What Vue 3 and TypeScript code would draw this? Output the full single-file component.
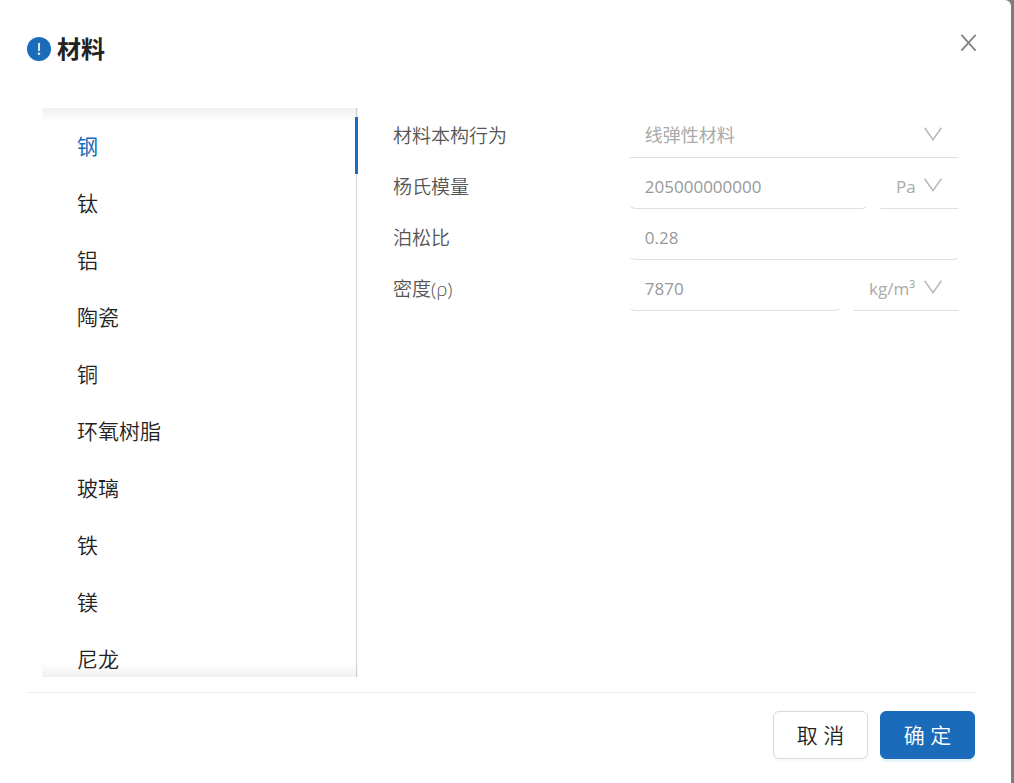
<script setup lang="ts">
import { ref } from 'vue'

interface Property {
  id: string
  label: string
  value: string
  unit?: string
  kind: 'select' | 'input'
}

const materials: string[] = ['钢', '钛', '铝', '陶瓷', '铜', '环氧树脂', '玻璃', '铁', '镁', '尼龙']
const selected = ref<string>('钢')

const properties: Property[] = [
  { id: 'behavior', label: '材料本构行为', value: '线弹性材料', kind: 'select' },
  { id: 'young', label: '杨氏模量', value: '205000000000', unit: 'Pa', kind: 'input' },
  { id: 'poisson', label: '泊松比', value: '0.28', kind: 'input' },
  { id: 'density', label: '密度(ρ)', value: '7870', unit: 'kg/m³', kind: 'input' },
]
</script>

<template>
  <div class="backdrop">
    <section class="dialog" role="dialog" aria-labelledby="dialog-title">
      <header class="header">
        <svg class="info" viewBox="0 0 24 24" aria-hidden="true">
          <circle cx="12" cy="12" r="12" fill="#1b6bbb" />
          <rect x="11" y="6" width="2" height="8" fill="#dbe8f5" />
          <circle cx="12" cy="16.8" r="1.3" fill="#dbe8f5" />
        </svg>
        <h1 id="dialog-title" class="title">材料</h1>
        <button class="close" type="button" aria-label="关闭">
          <svg viewBox="0 0 17 18" aria-hidden="true">
            <path d="M1.4 0.8 15.6 16.6M15.6 0.8 1.4 16.6" fill="none" stroke="#858585" stroke-width="1.9" />
          </svg>
        </button>
      </header>

      <div class="body">
        <nav class="side">
          <ul class="list">
            <li v-for="name in materials" :key="name">
              <button
                type="button"
                class="item"
                :class="{ active: name === selected }"
                @click="selected = name"
              >{{ name }}</button>
            </li>
          </ul>
        </nav>

        <form class="form" @submit.prevent>
          <div v-for="p in properties" :key="p.id" class="row">
            <label class="label" :for="p.id">{{ p.label }}</label>
            <div class="fields">
              <div v-if="p.kind === 'select'" class="picker wide">
                <select :id="p.id" class="select" disabled>
                  <option>{{ p.value }}</option>
                </select>
                <svg class="chevron" viewBox="0 0 18 14" aria-hidden="true">
                  <path d="M0.6 0.8 9 12.6 17.4 0.8" fill="none" stroke="#b8b8b8" stroke-width="1.6" />
                </svg>
              </div>
              <input v-else :id="p.id" class="input" type="text" :value="p.value" disabled />
              <div v-if="p.unit" class="picker">
                <select class="select" :aria-label="p.label + ' 单位'" disabled>
                  <option>{{ p.unit }}</option>
                </select>
                <svg class="chevron" viewBox="0 0 18 14" aria-hidden="true">
                  <path d="M0.6 0.8 9 12.6 17.4 0.8" fill="none" stroke="#b8b8b8" stroke-width="1.6" />
                </svg>
              </div>
            </div>
          </div>
        </form>
      </div>

      <footer class="footer">
        <button type="button" class="btn">取 消</button>
        <button type="button" class="btn primary">确 定</button>
      </footer>
    </section>
  </div>
</template>

<style>
body {
  margin: 0;
}
</style>

<style scoped>
.backdrop {
  box-sizing: border-box;
  height: 100vh;
  padding-right: 3px;
  background: #7c7c7c;
  font-family: "Open Sans", "Noto Sans CJK SC", sans-serif;
  font-weight: 350;
}
.dialog {
  box-sizing: border-box;
  height: 100%;
  display: flex;
  flex-direction: column;
  padding: 24px 36px 24px 27px;
  background: #fff;
  border-radius: 0 6px 0 0;
  color: #222;
}
.header {
  display: flex;
  align-items: center;
  gap: 6px;
  height: 50px;
}
.info {
  width: 24px;
  height: 24px;
}
.title {
  flex: 1;
  margin: 0;
  font-size: 24px;
  line-height: 36px;
  font-weight: 700;
}
.close {
  align-self: flex-start;
  display: flex;
  margin-right: -2px;
  padding: 10px 0;
  border: 0;
  background: none;
  cursor: pointer;
}
.close svg {
  width: 17px;
  height: 18px;
}
.body {
  flex: 1;
  min-height: 0;
  display: flex;
  gap: 35px;
  padding: 34px 16px 15px 15px;
}
.side {
  position: relative;
  flex: 0 0 316px;
}
.side::before,
.side::after {
  content: "";
  position: absolute;
  left: 0;
  right: 0;
  height: 14px;
  pointer-events: none;
}
.side::before {
  top: 0;
  background: linear-gradient(rgba(0, 0, 0, 0.06), rgba(0, 0, 0, 0));
}
.side::after {
  bottom: 0;
  background: linear-gradient(rgba(0, 0, 0, 0), rgba(0, 0, 0, 0.06));
}
.list {
  box-sizing: border-box;
  height: 100%;
  margin: 0;
  padding: 9px 0 0;
  overflow-y: auto;
  scrollbar-width: none;
  list-style: none;
  background: linear-gradient(#d4d4d4, #d4d4d4) 314px 0 / 1px 100% no-repeat;
}
.item {
  display: block;
  width: 100%;
  height: 57px;
  padding: 0 35px;
  border: 0;
  border-right: 3px solid transparent;
  background: none;
  color: #222;
  font-family: inherit;
  font-size: 21px;
  font-weight: inherit;
  line-height: 32px;
  text-align: left;
  cursor: pointer;
}
.item.active {
  border-right-color: #1b6bbb;
  color: #1b6bbb;
  font-weight: 400;
}
.form {
  flex: 1;
  min-width: 0;
}
.row {
  display: grid;
  grid-template-columns: 5fr 7fr;
  height: 51px;
  align-items: stretch;
}
.label {
  padding-top: 12px;
  color: #555;
  font-size: 19px;
  line-height: 32px;
}
.fields {
  display: flex;
  gap: 12px;
  min-width: 0;
}
.input,
.select {
  box-sizing: border-box;
  width: 100%;
  height: 42px;
  margin: 8px 0 0;
  border: 1px solid transparent;
  border-bottom-color: #e0e0e0;
  background: transparent;
  color: #999;
  font-family: inherit;
  font-size: 17px;
  line-height: 26px;
  opacity: 1;
}
.input {
  flex: 1;
  min-width: 0;
  padding: 0 15px 3px;
  border-radius: 6px;
}
.picker {
  position: relative;
}
.wide {
  flex: 1;
}
.select {
  appearance: none;
  padding: 0 42px 3px 15px;
  border-radius: 0;
  color: #aaa;
}
.wide .select {
  padding-bottom: 4px;
  font-size: 18px;
}
.chevron {
  position: absolute;
  top: 19px;
  right: 17px;
  width: 18px;
  height: 14px;
  pointer-events: none;
}
.footer {
  display: flex;
  justify-content: flex-end;
  gap: 12px;
  padding-top: 18px;
  border-top: 1px solid #ececec;
}
.btn {
  box-sizing: border-box;
  min-width: 95px;
  height: 48px;
  padding: 0 22px;
  border: 1px solid #d9d9d9;
  border-radius: 6px;
  background: #fff;
  box-shadow: 0 3px 0 rgba(0, 0, 0, 0.02);
  color: #222;
  font-family: inherit;
  font-size: 21px;
  font-weight: inherit;
  line-height: 32px;
  white-space: nowrap;
  cursor: pointer;
}
.primary {
  border-color: #1b6bbb;
  background: #1b6bbb;
  box-shadow: 0 3px 0 #e6f4f8;
  color: #fff;
}
</style>
